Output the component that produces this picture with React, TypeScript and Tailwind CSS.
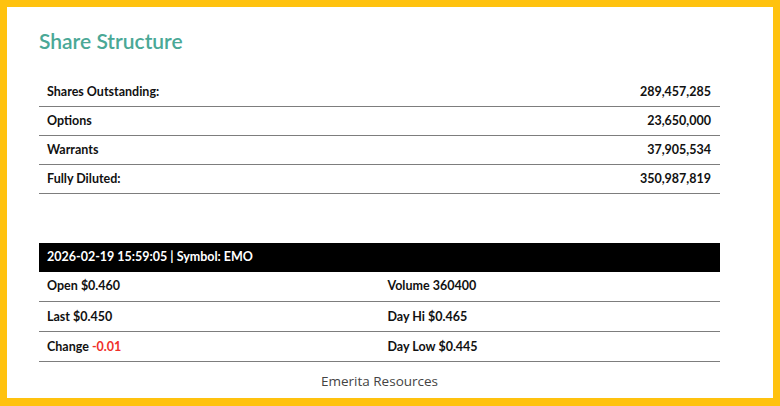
const shares = [
  { label: 'Shares Outstanding:', value: '289,457,285' },
  { label: 'Options', value: '23,650,000' },
  { label: 'Warrants', value: '37,905,534' },
  { label: 'Fully Diluted:', value: '350,987,819' },
];

const quote = [
  [{ label: 'Open', value: '$0.460' }, { label: 'Volume', value: '360400' }],
  [{ label: 'Last', value: '$0.450' }, { label: 'Day Hi', value: '$0.465' }],
  [{ label: 'Change', value: '-0.01', down: true }, { label: 'Day Low', value: '$0.445' }],
];

export default function App() {
  return (
    <div className="h-[406px] w-[780px] border-[7px] border-b-[8px] border-[#ffc20e] bg-white font-['Lato',sans-serif] text-[#111]">
      <div className="pl-8 pt-[19px]">
        <div className="w-[681px]">
          <h2 className="text-[21px] font-semibold leading-[30px] text-[#4aa896]">Share Structure</h2>

          <table className="mt-[21px] w-full border-collapse text-[12.5px] font-bold">
            <tbody>
              {shares.map((row) => (
                <tr key={row.label} className="h-[29px] border-b border-[#7d7d7d]">
                  <td className="pl-2 pt-[2px]">{row.label}</td>
                  <td className="pr-[9px] pt-[2px] text-right">{row.value}</td>
                </tr>
              ))}
            </tbody>
          </table>

          <table className="mt-[49px] w-full table-fixed border-collapse text-[12.5px] font-bold">
            <thead>
              <tr className="h-[29px] bg-black text-white">
                <th colSpan={2} className="pl-2 pt-[1px] text-left font-bold">2026-02-19 15:59:05 | Symbol: EMO</th>
              </tr>
            </thead>
            <tbody>
              {quote.map((row, i) => (
                <tr key={i} className="h-[30px] border-b border-[#7d7d7d]">
                  {row.map((cell) => (
                    <td key={cell.label} className="pl-2 pt-[1px]">
                      {cell.label}{' '}
                      <span className={cell.down ? 'text-[#f0302a]' : ''}>{cell.value}</span>
                    </td>
                  ))}
                </tr>
              ))}
            </tbody>
          </table>

          <p className="mt-[9px] text-center font-['Open_Sans',sans-serif] text-[13.5px] text-[#444]">Emerita Resources</p>
        </div>
      </div>
    </div>
  );
}
